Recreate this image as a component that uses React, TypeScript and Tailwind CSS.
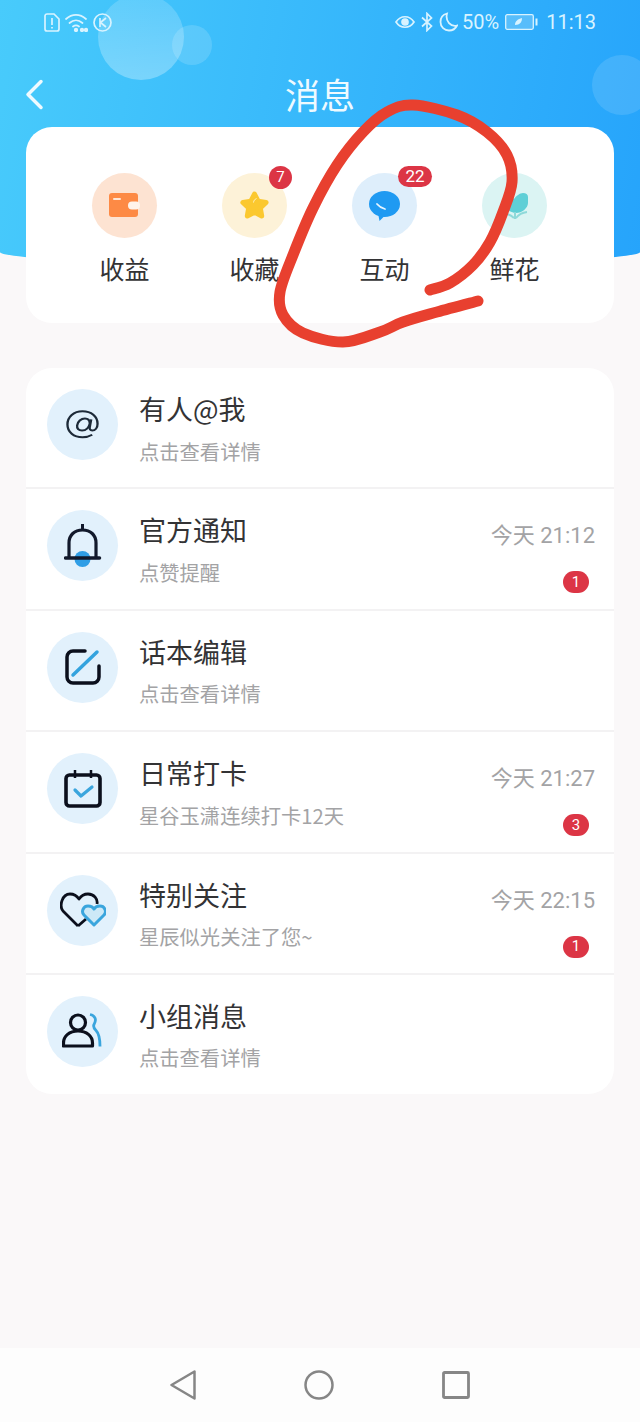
import type { ReactNode } from "react"

const scribble: [number, number][] = [
  [430, 290], [450, 283], [473, 265], [490, 242], [503, 212], [512, 182], [507, 155], [487, 132], [457, 115],
  [413, 105], [387, 112], [363, 132], [337, 165], [313, 208], [293, 255], [280, 292], [283, 315], [303, 333],
  [343, 342], [380, 332], [403, 322], [437, 312], [478, 301],
]

// smooth line through the hand drawn points
function smoothPath(points: [number, number][]) {
  let d = `M${points[0][0]} ${points[0][1]}`
  for (let i = 0; i < points.length - 1; i++) {
    const p0 = points[Math.max(i - 1, 0)]
    const p1 = points[i]
    const p2 = points[i + 1]
    const p3 = points[Math.min(i + 2, points.length - 1)]
    d += ` C${p1[0] + (p2[0] - p0[0]) / 6} ${p1[1] + (p2[1] - p0[1]) / 6} ${p2[0] - (p3[0] - p1[0]) / 6} ${p2[1] - (p3[1] - p1[1]) / 6} ${p2[0]} ${p2[1]}`
  }
  return d
}

function StatusBar() {
  return (
    <div className="flex h-[44px] items-center justify-between pl-[44px] pr-[44px] text-[20px] text-[#d8f3ff]">
      <div className="flex items-center gap-[5px]">
        <svg width="16" height="19" viewBox="0 0 16 19" fill="none" stroke="currentColor" strokeWidth="1.7">
          <path d="M3 1h7l5 5v10a2 2 0 0 1-2 2H3a2 2 0 0 1-2-2V3a2 2 0 0 1 2-2z" />
          <path d="M8 5v7M8 14v1.6" />
        </svg>
        <svg width="23" height="19" viewBox="0 0 23 19" fill="none" stroke="currentColor" strokeWidth="1.7" strokeLinecap="round">
          <path d="M1 6c6-5.500 14-5.500 20 0M4.500 10c4-3.500 9-3.500 13 0M8 13.500c2-1.600 4-1.600 6 0" />
          <circle cx="11" cy="17" r="1.300" fill="currentColor" />
          <circle cx="17" cy="17" r="1.300" fill="currentColor" />
          <circle cx="21" cy="17" r="1.300" fill="currentColor" />
        </svg>
        <svg width="19" height="19" viewBox="0 0 19 19" fill="none" stroke="currentColor" strokeWidth="1.7">
          <circle cx="9.500" cy="9.500" r="8.500" />
          <path d="M7 5v9M13 5L7.500 9.500 13 14" />
        </svg>
      </div>
      <div className="flex items-center font-['Roboto',sans-serif]">
        <svg width="20" height="14" viewBox="0 0 20 14" fill="none" stroke="currentColor" strokeWidth="1.7">
          <path d="M1 7c4.500-7 13.500-7 18 0-4.500 7-13.500 7-18 0z" />
          <circle cx="10" cy="7" r="3" fill="currentColor" />
        </svg>
        <svg className="ml-[6px]" width="12" height="20" viewBox="0 0 12 20" fill="none" stroke="currentColor" strokeWidth="1.7">
          <path d="M1 5.500L10.500 14 6 18.500V1.500L10.500 6 1 14.500" />
        </svg>
        <svg className="ml-[6px]" width="19" height="20" viewBox="0 0 19 20" fill="none" stroke="currentColor" strokeWidth="1.8">
          <path d="M8 1.500C4 2.500 1.500 6 1.500 10c0 5 4 8.500 8.500 8.500 3.500 0 6.500-1.800 8-5-6 1.500-12-4-10-12z" />
        </svg>
        <span className="ml-[4px] leading-none">50%</span>
        <svg className="ml-[6px]" width="33" height="16" viewBox="0 0 33 16">
          <rect x="0.700" y="0.700" width="27.600" height="14.600" rx="1.500" fill="#ffffff33" stroke="currentColor" strokeWidth="1.300" />
          <path d="M10 11c0-4 3-6 7-7 0 4-2 7-7 7z" fill="currentColor" />
          <rect x="30.500" y="4.500" width="2" height="7" fill="currentColor" />
        </svg>
        <span className="ml-[8px] leading-none">11:13</span>
      </div>
    </div>
  )
}

function WalletIcon() {
  return (
    <svg width="31" height="25" viewBox="0 0 31 25">
      <rect x="0" y="0" width="29" height="24" rx="3" fill="#fd8a45" />
      <rect x="4" y="5" width="8" height="2" rx="1" fill="#ffe6d6" />
      <rect x="19" y="8.500" width="12" height="8" rx="4" fill="#fff3ea" />
    </svg>
  )
}

function StarIcon() {
  return (
    <svg width="31" height="31" viewBox="0 0 31 31">
      <path
        d="M15.500 4l3.600 7.200 8 1.200-5.800 5.600 1.400 8-7.200-3.800-7.200 3.800 1.400-8-5.800-5.600 8-1.200z"
        fill="#fbc82f"
        stroke="#fbc82f"
        strokeWidth="5"
        strokeLinejoin="round"
      />
      <path d="M17.500 8.500c-1.800.8-2.800 2.200-3 4" fill="none" stroke="#fff3c4" strokeWidth="1" />
    </svg>
  )
}

function ChatIcon() {
  return (
    <svg width="31" height="30" viewBox="0 0 31 30">
      <ellipse cx="15.500" cy="13" rx="15.500" ry="13" fill="#1f9af2" />
      <path d="M9 22l1.500 8 6-6z" fill="#1f9af2" />
      <path d="M8 13c2 2.500 4.500 4 8 5" fill="none" stroke="#e6f5ff" strokeWidth="1.800" strokeLinecap="round" />
    </svg>
  )
}

function FlowerIcon() {
  return (
    <svg width="28" height="28" viewBox="0 0 28 28">
      <path d="M4 3c3 0 6 1 9 4 2-3 6-6 9-6 3 0 5 1.500 5 4v6c0 5-6 10-12 10S3 16 3 11V4c0-.5.500-1 1-1z" fill="#5fcfd6" />
      <path d="M14 20v7M4 22c3 0 6 1 9 4M26 20c-4 .5-8 2-11 6" fill="none" stroke="#8ed9d9" strokeWidth="2" />
    </svg>
  )
}

function AtIcon() {
  return (
    <svg width="33" height="29" viewBox="0 0 34 34" preserveAspectRatio="none" fill="none" stroke="#1d2a38" strokeWidth="2.400">
      <path d="M27 29c-3 2-6 3-10 3C8 32 1.500 26 1.500 17S8 1.500 17 1.500 32.500 7.500 32.500 16c0 5-2.500 8-5.500 8-2 0-3-1.500-2.500-4l1.500-9" />
      <path d="M24.500 16c-1 5-4 8-8 8-3.500 0-5.500-2.500-5-6 .5-4.500 4-8 8-8 3 0 5 2 5 6z" />
    </svg>
  )
}

function BellIcon() {
  return (
    <svg width="38" height="44" viewBox="0 0 38 44" fill="none">
      <circle cx="18.500" cy="35" r="8" fill="#2f9ee6" />
      <path d="M5 34V19C5 11 10.500 6 18.500 6S32 11 32 19v15" stroke="#12192b" strokeWidth="3.200" />
      <path d="M18.500 0v6" stroke="#12192b" strokeWidth="3" />
      <path d="M1.500 34h34" stroke="#12192b" strokeWidth="3.500" strokeLinecap="round" />
    </svg>
  )
}

function EditIcon() {
  return (
    <svg width="36" height="36" viewBox="0 0 36 36" fill="none">
      <path d="M20 2H8a6 6 0 0 0-6 6v20a6 6 0 0 0 6 6h20a6 6 0 0 0 6-6V17" stroke="#0b0f1c" strokeWidth="3.500" strokeLinecap="round" />
      <path d="M8 26L32 3" stroke="#34a3de" strokeWidth="3.500" strokeLinecap="round" />
    </svg>
  )
}

function CalendarIcon() {
  return (
    <svg width="38" height="38" viewBox="0 0 38 38" fill="none">
      <rect x="2" y="5" width="34" height="31" rx="3.500" stroke="#0b0f1c" strokeWidth="3.600" />
      <path d="M11 0v8M27 0v8" stroke="#0b0f1c" strokeWidth="2.500" />
      <path d="M11 20l6 6 11-9" stroke="#3aa5dd" strokeWidth="3.200" strokeLinecap="round" strokeLinejoin="round" />
    </svg>
  )
}

function HeartsIcon() {
  return (
    <svg width="46" height="36" viewBox="0 0 46 36" fill="none">
      <path
        d="M18 34L3 19C-1 14 2 2 10 2c4 0 7 2 9 5 2-3 5-5 9-5 6 0 10 5 9 10"
        stroke="#0b0f1c"
        strokeWidth="2.800"
        strokeLinejoin="round"
      />
      <path d="M18 34l8-7" stroke="#0b0f1c" strokeWidth="2.800" />
      <path
        d="M34 33L24 23c-3-3-1-9 4-9 3 0 5 1 6 3 1-2 3-3 6-3 5 0 7 6 4 9z"
        fill="#cde9f7"
        stroke="#3aa5dd"
        strokeWidth="3"
        strokeLinejoin="round"
      />
    </svg>
  )
}

function PeopleIcon() {
  return (
    <svg width="42" height="36" viewBox="0 0 42 36" fill="none">
      <path d="M28 1.500c5 1 7 5 4 10-1 2 0 4 2 6 3 3 4 9 4 16" stroke="#3aa5dd" strokeWidth="2.800" />
      <circle cx="16" cy="9.500" r="7.500" stroke="#0b0f1c" strokeWidth="3.200" />
      <path d="M1.500 33v-3c0-7 6-12 14.500-12s14.500 5 14.500 12v3z" stroke="#0b0f1c" strokeWidth="3.200" strokeLinejoin="round" />
    </svg>
  )
}

interface ShortcutProps {
  label: string
  circle: string
  icon: ReactNode
  badge?: ReactNode
}

function Shortcut({ label, circle, icon, badge }: ShortcutProps) {
  return (
    <div className="flex flex-col items-center">
      <div className={`relative flex h-[65px] w-[65px] items-center justify-center rounded-full ${circle}`}>
        {icon}
        {badge}
      </div>
      <span className="mt-[14px] text-[25px] leading-[32px] text-[#333335]">{label}</span>
    </div>
  )
}

interface RowProps {
  icon: ReactNode
  title: string
  subtitle: string
  time?: string
  count?: number
  last?: boolean
}

function Row({ icon, title, subtitle, time, count, last }: RowProps) {
  return (
    <div className={`flex items-start pl-[21px] pr-[19px] ${last ? "h-[119px]" : "h-[121.4px] border-b-2 border-[#f3f2f3]"}`}>
      <div className="mt-[21px] flex h-[71px] w-[71px] shrink-0 items-center justify-center rounded-full bg-[#e2f1fc]">
        {icon}
      </div>
      <div className="ml-[21px] flex-1 pt-[24px]">
        <div className="text-[27px] leading-[34px] text-[#333335]">{title}</div>
        <div className="mt-[10.5px] text-[20.3px] leading-[28px] text-[#a3a3a5]">{subtitle}</div>
      </div>
      {time && (
        <div className="flex flex-col items-end pt-[32px]">
          <span className="text-[22px] leading-[30px] text-[#a3a3a5] font-['Roboto','Noto_Sans_CJK_SC',sans-serif]">{time}</span>
          <span className="mr-[6px] mt-[20px] flex h-[22px] w-[26px] items-center justify-center rounded-full bg-[#dc3545] text-[15px] leading-none text-white font-['Roboto',sans-serif]">
            {count}
          </span>
        </div>
      )}
    </div>
  )
}

export default function App() {
  return (
    <div className="relative flex h-[1422px] w-[640px] flex-col overflow-hidden bg-[#faf8f9] font-['Noto_Sans_CJK_SC',sans-serif]">
      <header className="relative h-[265px] shrink-0 rounded-b-[320px_13px] bg-[linear-gradient(100deg,#48cbfb,#26a4fb)] text-white">
        <div className="absolute left-[98px] top-[-6px] h-[86px] w-[86px] rounded-full bg-linear-to-b from-white/15 to-white/30" />
        <div className="absolute left-[172px] top-[25px] h-[40px] w-[40px] rounded-full bg-white/15" />
        <div className="absolute left-[592px] top-[55px] h-[60px] w-[60px] rounded-full bg-white/12" />
        <div className="relative">
          <StatusBar />
          <div className="relative mt-[24px] flex h-[50px] items-center justify-center">
            <svg className="absolute left-[25px] top-[11px]" width="19" height="31" viewBox="0 0 19 31" fill="none" stroke="#eefaff" strokeWidth="3.500" strokeLinecap="round" strokeLinejoin="round">
              <path d="M16 2.500L3 15.500l13 13" />
            </svg>
            <span className="text-[35px] leading-none text-[#eefaff]">消息</span>
          </div>
        </div>
      </header>

      <section className="z-10 mx-[26px] mt-[-138px] h-[196px] shrink-0 rounded-[26px] bg-white">
        <div className="grid grid-cols-4 pl-[33.5px] pr-[34.5px] pt-[46px]">
          <Shortcut label="收益" circle="bg-[#fde3d2]" icon={<WalletIcon />} />
          <Shortcut
            label="收藏"
            circle="bg-[#fdf2d8]"
            icon={<StarIcon />}
            badge={
              <span className="absolute right-[-5px] top-[-7px] flex h-[23px] w-[23px] items-center justify-center rounded-full bg-[#dc3545] text-[15px] leading-none text-white font-['Roboto',sans-serif]">
                7
              </span>
            }
          />
          <Shortcut
            label="互动"
            circle="bg-[#deeefb]"
            icon={<ChatIcon />}
            badge={
              <span className="absolute left-[46px] top-[-7px] flex h-[21px] w-[34px] items-center justify-center rounded-full bg-[#dc3545] text-[17px] leading-none text-white font-['Roboto',sans-serif]">
                22
              </span>
            }
          />
          <Shortcut label="鲜花" circle="bg-[#dbf4f3]" icon={<FlowerIcon />} />
        </div>
      </section>

      <section className="mx-[26px] mt-[45px] shrink-0 overflow-hidden rounded-[26px] bg-white">
        <Row icon={<AtIcon />} title="有人@我" subtitle="点击查看详情" />
        <Row icon={<BellIcon />} title="官方通知" subtitle="点赞提醒" time="今天 21:12" count={1} />
        <Row icon={<EditIcon />} title="话本编辑" subtitle="点击查看详情" />
        <Row icon={<CalendarIcon />} title="日常打卡" subtitle="星谷玉潇连续打卡12天" time="今天 21:27" count={3} />
        <Row icon={<HeartsIcon />} title="特别关注" subtitle="星辰似光关注了您~" time="今天 22:15" count={1} />
        <Row icon={<PeopleIcon />} title="小组消息" subtitle="点击查看详情" last />
      </section>

      <nav className="mt-auto flex h-[74px] items-center justify-between bg-[#fdfdfd] px-[170px]">
        <svg width="26" height="30" viewBox="0 0 26 30" fill="none" stroke="#868686" strokeWidth="2.500" strokeLinejoin="round">
          <path d="M24.500 1.500v27L1.500 15z" />
        </svg>
        <svg width="30" height="30" viewBox="0 0 30 30" fill="none" stroke="#868686" strokeWidth="2.500">
          <circle cx="15" cy="15" r="13.500" />
        </svg>
        <svg width="28" height="28" viewBox="0 0 28 28" fill="none" stroke="#868686" strokeWidth="2.800" strokeLinejoin="round">
          <rect x="1.500" y="1.500" width="25" height="25" rx="1" />
        </svg>
      </nav>

      {/* red marker circle somebody drew over the screenshot */}
      <svg className="pointer-events-none absolute left-0 top-0 z-20" width="640" height="400" viewBox="0 0 640 400" fill="none">
        <path d={smoothPath(scribble)} stroke="#e8402f" strokeWidth="11" strokeLinecap="round" strokeLinejoin="round" />
      </svg>
    </div>
  )
}
